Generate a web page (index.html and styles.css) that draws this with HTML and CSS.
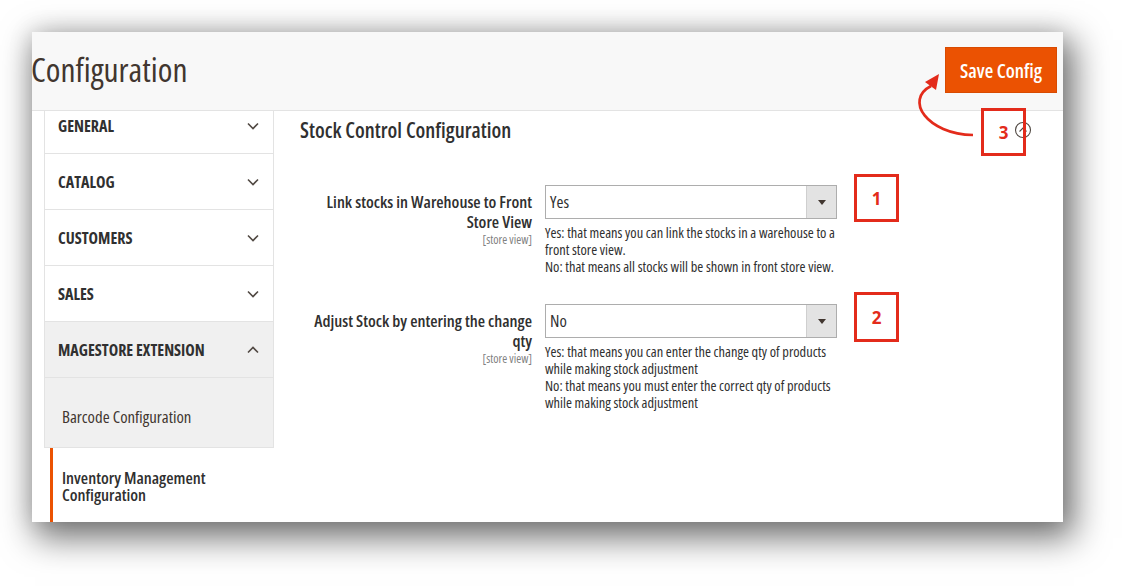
FILE: index.html
```html
<!DOCTYPE html>
<html lang="en">
<head>
<meta charset="utf-8">
<title>Configuration</title>
<link rel="stylesheet" href="styles.css">
</head>
<body>
<div class="stage">
  <div class="panel">
    <header class="page-header">
      <h1 class="page-title">Configuration</h1>
      <button class="btn-save" type="button">Save Config</button>
    </header>
    <div class="page-body">
      <nav class="sidebar">
        <ul class="nav-list">
          <li class="nav-item"><span class="nav-text">General</span><svg class="chev" viewBox="0 0 12 8" width="12" height="8"><polyline points="1,1.5 6,6.5 11,1.5"/></svg></li>
          <li class="nav-item"><span class="nav-text">Catalog</span><svg class="chev" viewBox="0 0 12 8" width="12" height="8"><polyline points="1,1.5 6,6.5 11,1.5"/></svg></li>
          <li class="nav-item"><span class="nav-text">Customers</span><svg class="chev" viewBox="0 0 12 8" width="12" height="8"><polyline points="1,1.5 6,6.5 11,1.5"/></svg></li>
          <li class="nav-item"><span class="nav-text">Sales</span><svg class="chev" viewBox="0 0 12 8" width="12" height="8"><polyline points="1,1.5 6,6.5 11,1.5"/></svg></li>
          <li class="nav-item is-open"><span class="nav-text">Magestore Extension</span><svg class="chev" viewBox="0 0 12 8" width="12" height="8"><polyline points="1,6.5 6,1.5 11,6.5"/></svg></li>
          <li class="sub-item">Barcode Configuration</li>
          <li class="sub-item is-current">Inventory Management Configuration</li>
        </ul>
      </nav>
      <main class="content">
        <div class="section-head">
          <h2 class="section-title">Stock Control Configuration</h2>
          <svg class="collapse-icon" viewBox="0 0 18 18" width="18" height="18"><circle cx="9" cy="9" r="7.5"/><polyline points="5.5,10.5 9,7 12.5,10.5"/></svg>
        </div>
        <div class="field">
          <div class="field-label">
            <span class="label-text">Link stocks in Warehouse to Front Store View</span>
            <span class="scope">[store view]</span>
          </div>
          <div class="field-control">
            <div class="select"><span class="select-value">Yes</span><span class="select-arrow"></span></div>
            <p class="note">Yes: that means you can link the stocks in a warehouse to a front store view.<br>No: that means all stocks will be shown in front store view.</p>
          </div>
        </div>
        <div class="field">
          <div class="field-label">
            <span class="label-text">Adjust Stock by entering the change qty</span>
            <span class="scope">[store view]</span>
          </div>
          <div class="field-control">
            <div class="select"><span class="select-value">No</span><span class="select-arrow"></span></div>
            <p class="note">Yes: that means you can enter the change qty of products while making stock adjustment<br>No: that means you must enter the correct qty of products while making stock adjustment</p>
          </div>
        </div>
      </main>
    </div>

    <div class="annot annot-1">1</div>
    <div class="annot annot-2">2</div>
    <div class="annot annot-3">3</div>
    <svg class="annot-arrow" viewBox="0 0 1031 490" width="1031" height="490">
      <path d="M941 103 C 895 102, 872 68, 899 54"/>
      <polygon points="907,42 893,50 904,58"/>
    </svg>
  </div>
</div>
</body>
</html>
```
FILE: styles.css
```css
* { box-sizing: border-box; }

html, body {
  margin: 0;
  padding: 0;
  background: #ffffff;
}

body {
  font-family: "Open Sans", "DejaVu Sans", sans-serif;
  font-stretch: 85%;
  color: #303030;
}

.stage {
  padding: 32px 0 65px 32px;
  min-height: 587px;
}

.panel {
  position: relative;
  width: 1031px;
  height: 490px;
  overflow: hidden;
  background: #ffffff;
  box-shadow: 7px 12px 32px 4px rgba(0, 0, 0, 0.55), -2px -2px 22px rgba(0, 0, 0, 0.1);
}

/* header */
.page-header {
  height: 79px;
  background: #f8f8f8;
  border-bottom: 1px solid #e3e3e3;
  display: flex;
  justify-content: space-between;
  align-items: flex-start;
  padding: 0 6px 0 0;
}

.page-title {
  margin: 0 0 0 -1px;
  font-size: 33.4px;
  font-weight: 400;
  line-height: 40px;
  padding-top: 17px;
  color: #41362f;
}

.btn-save {
  margin-top: 15px;
  width: 112px;
  height: 46px;
  background: #eb5202;
  border: 1px solid #d84b02;
  color: #ffffff;
  font-family: inherit;
  font-stretch: 85%;
  font-size: 19.5px;
  font-weight: 600;
  padding: 0;
  cursor: pointer;
}

/* body */
.page-body {
  display: flex;
  height: 411px;
}

.sidebar {
  width: 230px;
  margin-left: 12px;
  overflow: hidden;
  flex: none;
}

.nav-list {
  list-style: none;
  margin: -13px 0 0;
  padding: 0;
}

.nav-item {
  height: 56px;
  border: 1px solid #e3e3e3;
  border-top: 0;
  display: flex;
  align-items: center;
  justify-content: space-between;
  padding: 0 14px 0 13px;
}

.nav-text {
  font-size: 16px;
  font-weight: 700;
  text-transform: uppercase;
  color: #303030;
  line-height: 20px;
}

.nav-item.is-open {
  background: #f0f0f0;
}

.chev {
  fill: none;
  stroke: #514943;
  stroke-width: 1.6;
}

.sub-item {
  font-size: 16.8px;
  line-height: 18px;
  color: #41362f;
}

.sub-item:not(.is-current) {
  height: 70px;
  background: #f0f0f0;
  border: 1px solid #e3e3e3;
  border-top: 0;
  padding: 30px 0 0 17px;
}

.sub-item.is-current {
  margin-left: 6px;
  border-left: 3px solid #eb5202;
  padding: 21px 50px 30px 9px;
  font-weight: 600;
  line-height: 17px;
  color: #303030;
  height: 120px;
}

/* content */
.content {
  flex: 1;
  padding: 7px 31px 0 26px;
}

.section-head {
  display: flex;
  justify-content: space-between;
  align-items: center;
  height: 24px;
}

.section-title {
  margin: 0;
  font-size: 21px;
  font-weight: 600;
  line-height: 24px;
  color: #303030;
}

.collapse-icon {
  fill: none;
  stroke: #514943;
  stroke-width: 1.1;
}

.field {
  display: grid;
  grid-template-columns: 226px 292px;
  column-gap: 13px;
  margin-left: 6px;
  margin-top: 43px;
}

.field + .field {
  margin-top: 29px;
}

.field-label {
  text-align: right;
  padding-top: 7px;
}

.label-text {
  display: block;
  font-size: 16.8px;
  font-weight: 600;
  line-height: 20px;
  color: #303030;
}

.scope {
  display: block;
  font-size: 12px;
  line-height: 12px;
  margin-top: 2px;
  color: #808080;
}

.select {
  height: 34px;
  border: 1px solid #adadad;
  display: flex;
  background: #ffffff;
}

.select-value {
  flex: 1;
  font-size: 16.8px;
  line-height: 32px;
  padding-left: 4px;
  color: #303030;
}

.select-arrow {
  width: 30px;
  background: #e3e3e3;
  border-left: 1px solid #cfcfcf;
  display: flex;
  align-items: center;
  justify-content: center;
}

.select-arrow::after {
  content: "";
  border-left: 4px solid transparent;
  border-right: 4px solid transparent;
  border-top: 5px solid #41362f;
}

.note {
  margin: 5px -6px 0 0;
  font-size: 14.4px;
  line-height: 17px;
  color: #303030;
}

/* annotations */
.annot {
  position: absolute;
  width: 45px;
  height: 48px;
  border: 3px solid #e32b1b;
  color: #e32b1b;
  font-size: 17px;
  font-stretch: 100%;
  font-weight: 700;
  display: flex;
  align-items: center;
  justify-content: center;
}

.annot-1 { left: 822px; top: 142px; }
.annot-2 { left: 822px; top: 260px; height: 50px; }
.annot-3 { left: 949px; top: 76px; }

.annot-arrow {
  position: absolute;
  left: 0;
  top: 0;
  pointer-events: none;
}

.annot-arrow path {
  fill: none;
  stroke: #e32b1b;
  stroke-width: 2.7;
}

.annot-arrow polygon {
  fill: #e32b1b;
}
```
